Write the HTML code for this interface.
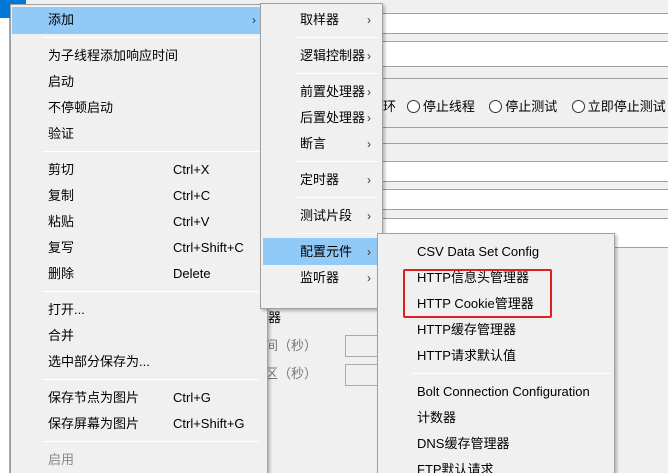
<!DOCTYPE html>
<html style="width:668px;height:473px;overflow:hidden"><head><meta charset="utf-8"><style>
*{margin:0;padding:0;box-sizing:border-box}
body{width:668px;height:473px;overflow:hidden;background:#f0f0f0;position:relative;font-family:"Liberation Sans","Microsoft YaHei","Noto Sans CJK SC",sans-serif;font-size:13px;color:#000}
.a{position:absolute}
.fld{position:absolute;left:370px;right:0;background:#fff;border-top:1px solid #a0a0a0;border-bottom:1px solid #a0a0a0}
.hl{position:absolute;border-top:1px solid #a0a0a0}
.menu{position:absolute;background:#f0f0f0;border:1px solid #a0a0a0;box-shadow:2px 2px 3px rgba(0,0,0,.25)}
.t{position:absolute;white-space:nowrap;line-height:16px}
.sep{position:absolute;height:1px;background:#d4d4d4;border-bottom:1px solid #fff}
.arr{position:absolute;font-size:12px;color:#333;line-height:16px}
.rad{display:inline-block;width:13px;height:13px;border:1px solid #333;border-radius:50%;vertical-align:-2px;margin-right:3px;background:#fff}
</style></head><body>
<div class="a" style="left:0;top:0;width:10px;height:473px;background:#fff;border-right:1px solid #aaa"></div>
<div class="a" style="left:0;top:0;width:26px;height:18px;background:#0078d7"></div>
<div class="fld" style="top:13px;height:21px"></div>
<div class="fld" style="top:41px;height:26px"></div>
<div class="a" style="left:370px;right:0;top:78px;height:50px;border-top:1px solid #a0a0a0;border-bottom:1px solid #a0a0a0"></div>
<div class="t" style="left:383px;top:99px">环 &nbsp;&nbsp;<span class="rad"></span>停止线程 &nbsp;&nbsp;&nbsp;<span class="rad"></span>停止测试 &nbsp;&nbsp;&nbsp;<span class="rad"></span>立即停止测试</div>
<div class="hl" style="left:370px;right:0;top:143px"></div>
<div class="fld" style="top:161px;height:21px"></div>
<div class="fld" style="top:189px;height:21px"></div>
<div class="fld" style="top:218px;height:30px"></div>
<div class="t" style="left:268px;top:310px">器</div>
<div class="t" style="left:265px;top:338px;color:#777">间（秒）</div>
<div class="t" style="left:265px;top:366px;color:#777">区（秒）</div>
<div class="a" style="left:345px;top:335px;width:40px;height:22px;border:1px solid #aaa;background:#f0f0f0"></div>
<div class="a" style="left:345px;top:364px;width:40px;height:22px;border:1px solid #aaa;background:#f0f0f0"></div>

<div class="menu" style="left:10px;top:4px;width:258px;height:469px;border-bottom:none">
<div class="a" style="left:1px;top:2px;width:249px;height:27px;background:#91c9f7"></div>
<div class="t" style="left:37px;top:7px">添加</div><div class="arr" style="left:241px;top:7px">›</div>
<div class="sep" style="left:32px;right:8px;top:32px"></div>
<div class="t" style="left:37px;top:43px">为子线程添加响应时间</div>
<div class="t" style="left:37px;top:69px">启动</div>
<div class="t" style="left:37px;top:95px">不停顿启动</div>
<div class="t" style="left:37px;top:121px">验证</div>
<div class="sep" style="left:32px;right:8px;top:146px"></div>
<div class="t" style="left:37px;top:157px">剪切</div><div class="t" style="left:162px;top:157px">Ctrl+X</div>
<div class="t" style="left:37px;top:183px">复制</div><div class="t" style="left:162px;top:183px">Ctrl+C</div>
<div class="t" style="left:37px;top:209px">粘贴</div><div class="t" style="left:162px;top:209px">Ctrl+V</div>
<div class="t" style="left:37px;top:235px">复写</div><div class="t" style="left:162px;top:235px">Ctrl+Shift+C</div>
<div class="t" style="left:37px;top:261px">删除</div><div class="t" style="left:162px;top:261px">Delete</div>
<div class="sep" style="left:32px;right:8px;top:286px"></div>
<div class="t" style="left:37px;top:297px">打开...</div>
<div class="t" style="left:37px;top:323px">合并</div>
<div class="t" style="left:37px;top:349px">选中部分保存为...</div>
<div class="sep" style="left:32px;right:8px;top:374px"></div>
<div class="t" style="left:37px;top:385px">保存节点为图片</div><div class="t" style="left:162px;top:385px">Ctrl+G</div>
<div class="t" style="left:37px;top:411px">保存屏幕为图片</div><div class="t" style="left:162px;top:411px">Ctrl+Shift+G</div>
<div class="sep" style="left:32px;right:8px;top:436px"></div>
<div class="t" style="left:37px;top:447px;color:#888">启用</div>
</div>

<div class="menu" style="left:260px;top:3px;width:123px;height:306px">
<div class="t" style="left:39px;top:8px">取样器</div><div class="arr" style="left:106px;top:8px">›</div>
<div class="sep" style="left:34px;right:5px;top:33px"></div>
<div class="t" style="left:39px;top:44px">逻辑控制器</div><div class="arr" style="left:106px;top:44px">›</div>
<div class="sep" style="left:34px;right:5px;top:69px"></div>
<div class="t" style="left:39px;top:80px">前置处理器</div><div class="arr" style="left:106px;top:80px">›</div>
<div class="t" style="left:39px;top:106px">后置处理器</div><div class="arr" style="left:106px;top:106px">›</div>
<div class="t" style="left:39px;top:132px">断言</div><div class="arr" style="left:106px;top:132px">›</div>
<div class="sep" style="left:34px;right:5px;top:157px"></div>
<div class="t" style="left:39px;top:168px">定时器</div><div class="arr" style="left:106px;top:168px">›</div>
<div class="sep" style="left:34px;right:5px;top:193px"></div>
<div class="t" style="left:39px;top:204px">测试片段</div><div class="arr" style="left:106px;top:204px">›</div>
<div class="sep" style="left:34px;right:5px;top:229px"></div>
<div class="a" style="left:2px;top:234px;width:115px;height:27px;background:#91c9f7"></div>
<div class="t" style="left:39px;top:240px">配置元件</div><div class="arr" style="left:106px;top:240px">›</div>
<div class="t" style="left:39px;top:266px">监听器</div><div class="arr" style="left:106px;top:266px">›</div>
</div>

<div class="menu" style="left:377px;top:233px;width:238px;height:240px;border-bottom:none">
<div class="t" style="left:39px;top:10px">CSV Data Set Config</div>
<div class="t" style="left:39px;top:36px">HTTP信息头管理器</div>
<div class="t" style="left:39px;top:62px">HTTP Cookie管理器</div>
<div class="t" style="left:39px;top:88px">HTTP缓存管理器</div>
<div class="t" style="left:39px;top:114px">HTTP请求默认值</div>
<div class="sep" style="left:34px;right:3px;top:139px"></div>
<div class="t" style="left:39px;top:150px">Bolt Connection Configuration</div>
<div class="t" style="left:39px;top:176px">计数器</div>
<div class="t" style="left:39px;top:202px">DNS缓存管理器</div>
<div class="t" style="left:39px;top:228px">FTP默认请求</div>
</div>
<div class="a" style="left:403px;top:269px;width:149px;height:49px;border:2px solid #e02020;border-radius:2px"></div>
</body></html>
